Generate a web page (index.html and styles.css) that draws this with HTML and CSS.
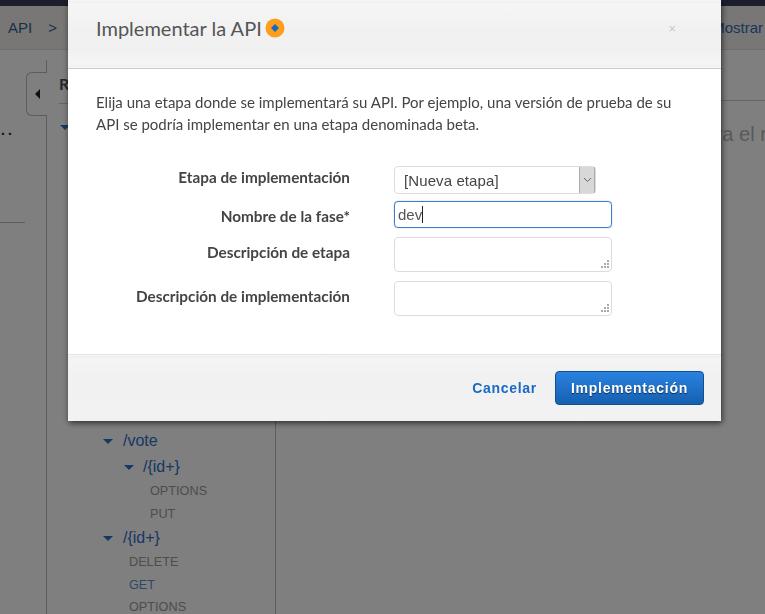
FILE: index.html
```html
<!DOCTYPE html>
<html lang="es">
<head>
  <meta charset="UTF-8" />
  <meta name="viewport" content="width=device-width, initial-scale=1.0"/>
  <title>Implementar la API</title>
  <link rel="stylesheet" href="styles.css">
</head>
<body>
  <div class="topbar"></div>
  <div class="crumbs">
    <div class="crumb-left"><span>API</span><span class="crumb-sep">&gt;</span></div>
    <div class="crumb-right">Mostrar</div>
  </div>

  <div class="workspace">
    <div class="far-left">
      <div class="dots">..</div>
      <div class="far-line"></div>
    </div>
    <div class="collapse-tab"><span class="tab-arrow"></span></div>
    <div class="resources">
      <div class="res-title">Recursos</div>
      <ul class="tree">
        <li class="node root"><span class="caret"></span><a>/</a></li>
        <li class="node lvl-1 vote"><span class="caret"></span><a>/vote</a></li>
        <li class="node lvl-2"><span class="caret"></span><a>/{id+}</a></li>
        <li class="method lvl-3 first-method">OPTIONS</li>
        <li class="method lvl-3">PUT</li>
        <li class="node lvl-1 id-node"><span class="caret"></span><a>/{id+}</a></li>
        <li class="method lvl-m first-method">DELETE</li>
        <li class="method lvl-m get">GET</li>
        <li class="method lvl-m">OPTIONS</li>
      </ul>
    </div>
    <div class="detail">
      <div class="detail-head"></div>
      <div class="detail-text">Seleccione un recurso para el recurso</div>
    </div>
  </div>

  <div class="backdrop"></div>

  <div class="modal">
    <div class="modal-head">
      <h2>Implementar la API</h2>
      <svg class="info-dot" width="20" height="20" viewBox="0 0 20 20">
        <circle cx="10" cy="10" r="9.5" fill="#fd9e1c"/>
        <path d="M10 6 14 10 10 14 6 10z" fill="#1766c2"/>
      </svg>
      <span class="close">×</span>
    </div>
    <div class="modal-body">
      <p>Elija una etapa donde se implementará su API. Por ejemplo, una versión de prueba de su API se podría implementar en una etapa denominada beta.</p>
      <form class="form">
        <label>Etapa de implementación</label>
        <div class="select">
          <span>[Nueva etapa]</span>
          <span class="select-btn">
            <svg width="9" height="6" viewBox="0 0 9 6"><path d="M1 1l3.5 3.5L8 1" fill="none" stroke="#666" stroke-width="1"/></svg>
          </span>
        </div>
        <label class="row-input">Nombre de la fase*</label>
        <div class="input">dev<span class="cursor"></span></div>
        <label class="row-area">Descripción de etapa</label>
        <div class="area"><span class="grip"></span></div>
        <label class="row-area">Descripción de implementación</label>
        <div class="area"><span class="grip"></span></div>
      </form>
    </div>
    <div class="modal-foot">
      <a class="cancel">Cancelar</a>
      <button class="deploy" type="button">Implementación</button>
    </div>
  </div>
</body>
</html>
```

FILE: styles.css
```css
* {
  margin: 0;
  padding: 0;
  box-sizing: border-box;
}

html, body {
  height: 100%;
  overflow: hidden;
}

body {
  display: flex;
  flex-direction: column;
  background: #fff;
  font-family: "Liberation Sans", Arial, sans-serif;
  color: #444;
}

.topbar {
  height: 6px;
  background: #343e56;
}

.crumbs {
  height: 44px;
  flex: none;
  display: flex;
  justify-content: space-between;
  align-items: center;
  padding: 0 2px 0 8px;
  background: #f0efec;
  border-bottom: 1px solid #ddd;
  font-size: 15px;
  color: #2f5f96;
}

.crumb-sep {
  margin-left: 16px;
}

.crumb-right {
  color: #2f6cb0;
}

.workspace {
  flex: 1;
  display: flex;
  min-height: 0;
}

.far-left {
  width: 26px;
  flex: none;
  padding-top: 72px;
}

.dots {
  padding-left: 1px;
  font-size: 14px;
  font-weight: bold;
  line-height: 16px;
  color: #222;
  letter-spacing: 3px;
}

.far-line {
  margin-top: 84px;
  height: 1px;
  background: #bbb;
  width: 25px;
}

.collapse-tab {
  position: relative;
  z-index: 1;
  width: 21px;
  flex: none;
  height: 44px;
  margin-top: 22px;
  margin-right: -1px;
  background: #fff;
  border: 1px solid #bbb;
  border-right: none;
  border-radius: 6px 0 0 6px;
  display: flex;
  align-items: center;
  justify-content: center;
}

.tab-arrow {
  width: 0;
  height: 0;
  border-style: solid;
  border-width: 5px 5px 5px 0;
  border-color: transparent #222 transparent transparent;
}

.resources {
  width: 230px;
  flex: none;
  margin-top: 10px;
  border-left: 1px solid #bbb;
  border-right: 1px solid #bbb;
  padding-left: 12px;
}

.res-title {
  margin-top: 15px;
  font-family: Lato, sans-serif;
  font-size: 16px;
  font-weight: 700;
  color: #44505e;
  line-height: 18px;
  height: 29px;
  border-bottom: 1px solid #ccc;
}

.tree {
  list-style: none;
}

.node {
  display: flex;
  align-items: center;
  color: #2f6fc8;
  font-size: 16px;
  line-height: 20px;
}

.node a {
  margin-left: 10px;
}

.caret {
  width: 0;
  height: 0;
  border-style: solid;
  border-width: 5px 5px 0 5px;
  border-color: #2f6fc8 transparent transparent transparent;
}

.root {
  margin-left: 1px;
  margin-top: 13px;
}

.vote {
  margin-top: 294px;
}

.lvl-1 {
  margin-left: 44px;
}

.lvl-2 {
  margin-left: 65px;
  margin-top: 6px;
}

.lvl-2 a {
  margin-left: 9px;
}

.id-node {
  margin-top: 2px;
}

.method {
  color: #9a9a9a;
  font-size: 12.7px;
  line-height: 23px;
}

.lvl-3 {
  margin-left: 91px;
}

.lvl-m {
  margin-left: 70px;
  line-height: 22.5px;
}

.first-method {
  margin-top: 3px;
}

.get {
  color: #5b8fcf;
}

.detail {
  flex: 1;
  margin-top: 10px;
  overflow: hidden;
}

.detail-head {
  height: 41px;
  border-bottom: 1px solid #ccc;
}

.detail-text {
  margin-top: 22px;
  margin-left: 214px;
  font-size: 20px;
  line-height: 22px;
  white-space: nowrap;
  color: #b4b4b4;
}

.backdrop {
  position: fixed;
  z-index: 2;
  inset: 0;
  background: rgba(0, 0, 0, 0.5);
}

.modal {
  position: fixed;
  z-index: 3;
  left: 68px;
  top: 0;
  width: 653px;
  height: 421px;
  display: flex;
  flex-direction: column;
  background: #fff;
  box-shadow: 1px 2px 6px rgba(0, 0, 0, 0.65);
  font-family: Lato, sans-serif;
}

.modal-head {
  height: 69px;
  flex: none;
  display: flex;
  align-items: center;
  padding: 0 28px 12px;
  background:
    radial-gradient(circle, #ededed 0.7px, transparent 1px) top / 4px 4px repeat-x,
    radial-gradient(circle, #ededed 0.7px, transparent 1px) bottom / 4px 4px repeat-x,
    linear-gradient(#f6f6f6, #f1f1f1 45%, #f1f1f1 75%, #f6f6f6);
  border-bottom: 1px solid #ccc;
}

.modal-head h2 {
  font-size: 20px;
  font-weight: 400;
  line-height: 26px;
  color: #555;
}

.info-dot {
  margin-left: 3px;
}

.close {
  margin-left: auto;
  margin-right: 17px;
  font-family: "Liberation Sans", sans-serif;
  font-size: 13px;
  color: #c4c4c4;
}

.modal-body {
  flex: 1;
  padding: 22px 28px 0;
}

.modal-body p {
  font-size: 15px;
  line-height: 22px;
  color: #444;
  width: 590px;
}

.form {
  margin-top: 31px;
  display: grid;
  grid-template-columns: 254px 218px;
  column-gap: 44px;
  row-gap: 9px;
  font-size: 15.3px;
}

.form label {
  text-align: right;
  font-weight: 700;
  color: #444;
  line-height: 22px;
}

.form .row-input {
  padding-top: 2px;
}

.form .row-area {
  padding-top: 4px;
}

.select {
  width: 202px;
  height: 28px;
  display: flex;
  align-items: center;
  justify-content: space-between;
  padding-left: 9px;
  border: 1px solid #dcdcdc;
  border-radius: 4px;
  font-family: "Liberation Sans", sans-serif;
  font-size: 15px;
  letter-spacing: 0.1px;
  color: #444;
}

.select-btn {
  width: 16px;
  height: 26px;
  display: flex;
  align-items: center;
  justify-content: center;
  background: #d8d8d8;
  border-left: 1px solid #aaa;
  border-right: 1px solid #aaa;
}

.input {
  height: 27px;
  margin-top: -2px;
  padding-left: 3px;
  border: 1px solid #3d7fc9;
  border-radius: 4px;
  box-shadow: 0 0 1px #3d7fc9;
  font-family: "Liberation Sans", sans-serif;
  font-size: 15px;
  line-height: 25px;
  color: #555;
}

.cursor {
  display: inline-block;
  width: 1px;
  height: 17px;
  background: #222;
  vertical-align: -3px;
}

.area {
  position: relative;
  height: 35px;
  border: 1px solid #dcdcdc;
  border-radius: 4px;
}

.grip {
  position: absolute;
  right: 2px;
  bottom: 3px;
  width: 2px;
  height: 2px;
  background: #aaa;
  box-shadow: -3px 0 #aaa, -6px 0 #aaa, 0 -3px #aaa, -3px -3px #aaa, 0 -6px #aaa;
}

.modal-foot {
  height: 67px;
  flex: none;
  display: flex;
  justify-content: flex-end;
  align-items: center;
  gap: 18px;
  padding: 0 17px 0 0;
  background:
    radial-gradient(circle, #ededed 0.7px, transparent 1px) top / 4px 4px repeat-x,
    linear-gradient(#f5f5f5, #f1f1f1 30%, #f2f2f2);
  border-top: 1px solid #e4e4e4;
}

.cancel {
  font-family: "Liberation Sans", sans-serif;
  font-size: 14px;
  font-weight: bold;
  letter-spacing: 0.7px;
  color: #1a6ac2;
}

.deploy {
  width: 149px;
  height: 34px;
  border: 1px solid #11508f;
  border-radius: 4px;
  background: linear-gradient(#2a82e0, #1560b0);
  font-family: "Liberation Sans", sans-serif;
  font-size: 14px;
  font-weight: bold;
  letter-spacing: 0.75px;
  color: #fff;
  text-shadow: 0 1px 1px rgba(0, 0, 0, 0.6);
}
```
